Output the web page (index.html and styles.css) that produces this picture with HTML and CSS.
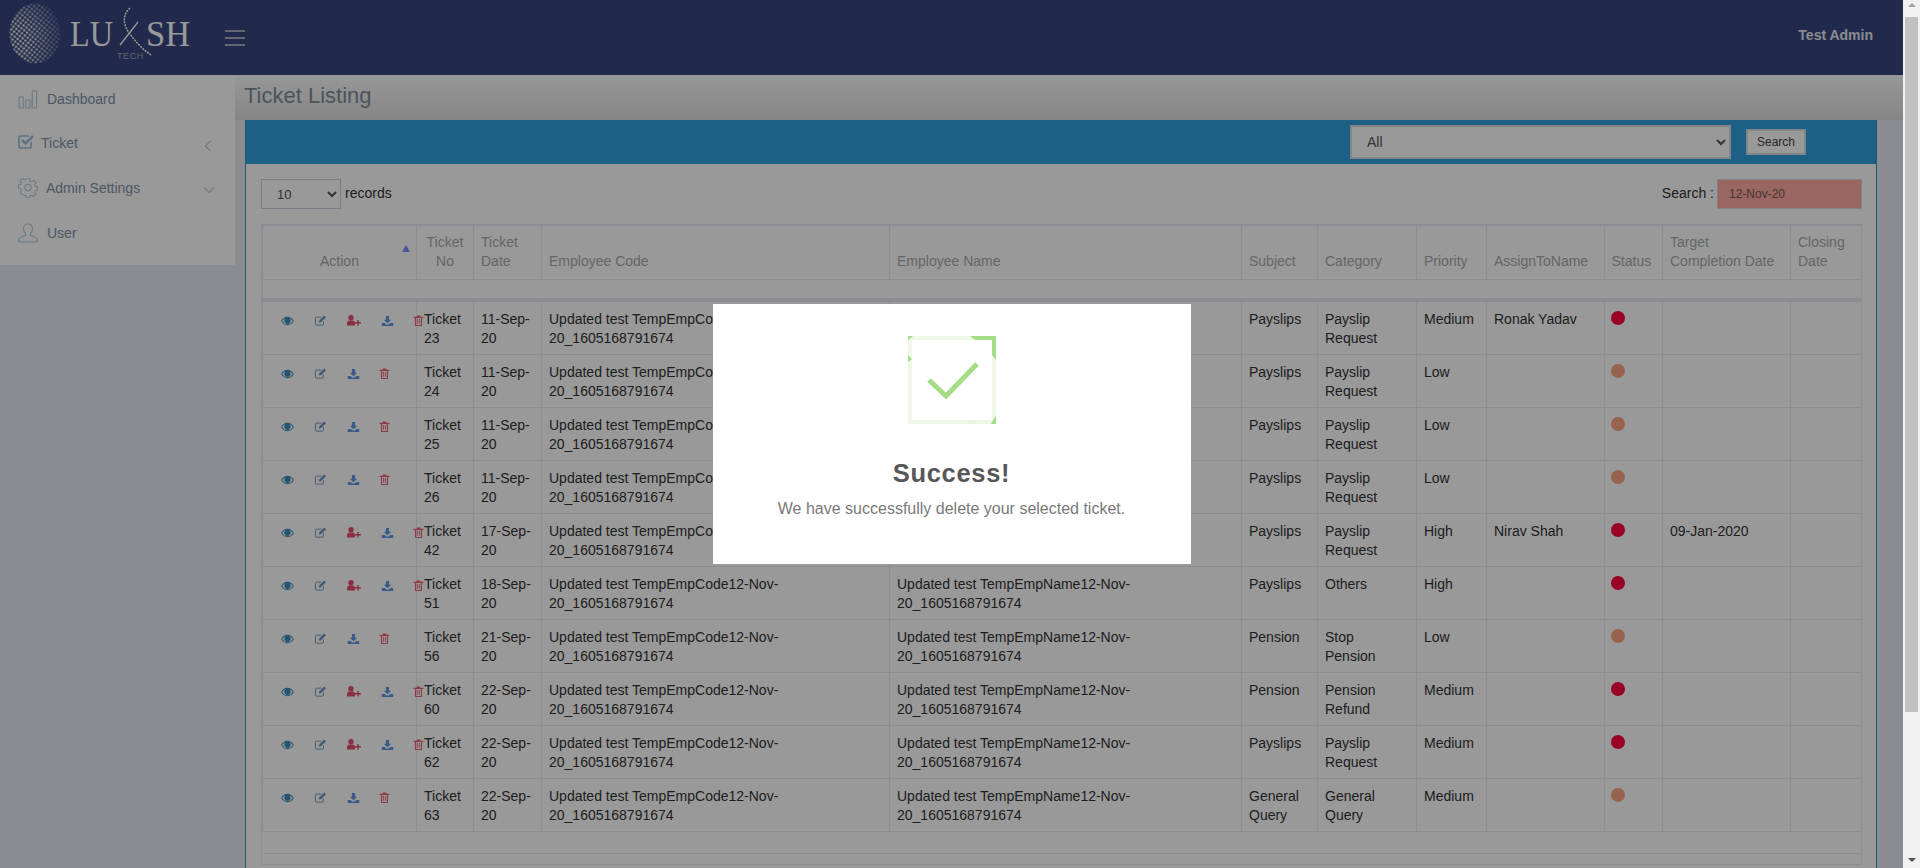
FILE: index.html
```html
<!DOCTYPE html>
<html lang="en">
<head>
<meta charset="utf-8">
<title>Ticket Listing</title>
<link rel="stylesheet" href="styles.css">
</head>
<body>
<svg class="defs" width="0" height="0" aria-hidden="true">
  <defs>
    <symbol id="i-eye" viewBox="0 0 16 12"><path d="M8 1C4.600 1 1.800 3.200.4 6c1.400 2.800 4.200 5 7.600 5s6.200-2.200 7.600-5C14.200 3.200 11.400 1 8 1zm0 9C5.200 10 2.900 8.300 1.700 6 2.700 4.300 4.200 3 6 2.400 4.900 3 4.200 4.300 4.200 5.800 4.200 7.900 5.900 9.600 8 9.600s3.800-1.700 3.800-3.800c0-1.500-.7-2.800-1.800-3.400 1.800.6 3.300 1.900 4.300 3.600C13.100 8.300 10.800 10 8 10z" fill="currentColor"/></symbol>
    <symbol id="i-edit" viewBox="0 0 14 13"><path d="M10.500 7.500v3a1.500 1.500 0 0 1-1.500 1.500H2.500A1.500 1.500 0 0 1 1 10.500V4A1.500 1.500 0 0 1 2.500 2.500H8" fill="none" stroke="currentColor" stroke-width="1.100"/><path d="M5 8.900 5.500 6.500 11.400.7 13.400 2.700 7.500 8.500z" fill="currentColor"/></symbol>
    <symbol id="i-add" viewBox="0 0 14 11"><circle cx="4" cy="2.800" r="2.700" fill="currentColor"/><path d="M0 10.500V8.300C0 6.700 1 5.500 2.500 5.500h3C7 5.500 8 6.700 8 8.300v2.200z" fill="currentColor"/><path d="M8 7.800h6M11 5v5.600" stroke="currentColor" stroke-width="1.400" fill="none"/></symbol>
    <symbol id="i-down" viewBox="0 0 13 12"><path d="M4.700 0h3.600v4.200h2.500L6.500 8.300 2.200 4.200h2.500zM0 8h3.300L5 9.700h3L9.700 8H13v3.600H0z" fill="currentColor"/></symbol>
    <symbol id="i-trash" viewBox="0 0 11 13"><path d="M0 2h11v1.300H0zM3.500 2V.5h4V2" fill="currentColor"/><path d="M1.500 3.300v8.200c0 .6.400 1 1 1h6c.6 0 1-.4 1-1V3.300H8.200v7.900H2.800V3.300zM4 4.500h1v5.500H4zM6 4.500h1v5.500H6z" fill="currentColor"/></symbol>
    <pattern id="dots" width="3.600" height="3.600" patternUnits="userSpaceOnUse" patternTransform="rotate(38)">
      <circle cx="1.800" cy="1.800" r="1.350" fill="#eee"/>
    </pattern>
    <radialGradient id="fade" cx="0.150" cy="0.600" r="0.950">
      <stop offset="0.250" stop-color="#fff"/>
      <stop offset="0.600" stop-color="#999"/>
      <stop offset="0.850" stop-color="#444"/>
      <stop offset="1" stop-color="#111"/>
    </radialGradient>
    <mask id="globe-mask"><ellipse cx="35" cy="33.500" rx="25.500" ry="30" fill="url(#fade)"/></mask>
  </defs>
</svg>

<div class="page">
<header class="topbar">
  <svg class="logo" width="200" height="75" viewBox="0 0 200 75" role="img" aria-label="Luxsh Tech logo">
    <rect x="8" y="2" width="56" height="64" fill="url(#dots)" mask="url(#globe-mask)"/>
    <text class="logo-word" x="70" y="46" textLength="43" lengthAdjust="spacingAndGlyphs">LU</text>
    <text class="logo-word" x="146" y="46" textLength="44" lengthAdjust="spacingAndGlyphs">SH</text>
    <path d="M130 8C122 15 123 25 130 34C136 42 142 49 151 55" fill="none" stroke="#fff" stroke-width="1.500" stroke-dasharray="2 1"/>
    <path d="M120 45 138 22" fill="none" stroke="#fff" stroke-width="1.300"/>
    <text class="logo-tech" x="117" y="59">TECH</text>
  </svg>
  <button class="burger" type="button" aria-label="Toggle menu"><span></span><span></span><span></span></button>
  <div class="admin">Test Admin</div>
</header>

<div class="layout">
  <nav class="sidebar">
    <a class="nav-item nav-dash">
      <svg width="20" height="19" viewBox="0 0 20 19" fill="none" stroke="currentColor" stroke-width="1.200"><rect x="1" y="7" width="4.300" height="11"/><rect x="7.700" y="10" width="4.300" height="8"/><rect x="14.300" y="1" width="4.300" height="17"/></svg>
      <span>Dashboard</span>
    </a>
    <a class="nav-item nav-ticket">
      <svg class="tick" width="17" height="15" viewBox="0 0 17 15"><path d="M13 8v4.500a1.500 1.500 0 0 1-1.500 1.500H2.500A1.500 1.500 0 0 1 1 12.500V3.500A1.500 1.500 0 0 1 2.500 2H11" fill="none" stroke="currentColor" stroke-width="1.700"/><path d="M4 6 7.500 9.500 15 2" fill="none" stroke="currentColor" stroke-width="2.600"/></svg>
      <span>Ticket</span>
      <svg class="chev" width="8" height="12" viewBox="0 0 8 12"><path d="M6.500 1 1.500 6l5 5" fill="none" stroke="currentColor" stroke-width="1.300"/></svg>
    </a>
    <a class="nav-item nav-admin">
      <svg width="20" height="20" viewBox="0 0 20 20" fill="none" stroke="currentColor" stroke-width="1.200"><path d="M8.300 1h3.400l.5 2.500 1.700.7 2.100-1.400 2.400 2.400-1.400 2.100.7 1.700 2.300.5v3.400l-2.300.5-.7 1.700 1.400 2.100-2.400 2.400-2.100-1.400-1.700.7-.5 2.100H8.300l-.5-2.100-1.700-.7L4 17.500l-2.400-2.400L3 13l-.7-1.700L0 10.800V7.400l2.300-.5L3 5.200 1.600 3.100 4 .7l2.100 1.400 1.700-.7z" transform="translate(.5 -.2) scale(.95)"/><circle cx="10" cy="9.500" r="3.200"/></svg>
      <span>Admin Settings</span>
      <svg class="chev" width="12" height="8" viewBox="0 0 12 8"><path d="M1 1.500 6 6.500l5-5" fill="none" stroke="currentColor" stroke-width="1.300"/></svg>
    </a>
    <a class="nav-item nav-user">
      <svg width="20" height="20" viewBox="0 0 20 20" fill="none" stroke="currentColor" stroke-width="1.200"><path d="M10 1c-3 0-4.500 2-4.500 4.800 0 2 .8 3.700 2 4.700v1.700L1 15.500V19h18v-3.500l-6.500-3.300v-1.700c1.200-1 2-2.700 2-4.700C14.500 3 13 1 10 1z"/></svg>
      <span>User</span>
    </a>
  </nav>

  <main class="main">
    <h1 class="page-title">Ticket Listing</h1>
    <div class="content">
      <section class="card">
        <div class="card-bar">
          <select class="bar-select"><option>All</option></select>
          <button class="bar-button" type="button">Search</button>
        </div>
        <div class="card-body">
          <div class="tools">
            <label class="records"><select class="len-select"><option>10</option></select> records</label>
            <label class="search">Search : <input class="search-input" type="text" value="12-Nov-20"></label>
          </div>
          <div class="table-wrap">
            <table class="grid">
              <colgroup>
                <col class="c1"><col class="c2"><col class="c3"><col class="c4"><col class="c5"><col class="c6"><col class="c7"><col class="c8"><col class="c9"><col class="c10"><col class="c11"><col class="c12">
              </colgroup>
              <thead>
                <tr class="head">
                  <th class="center sort">Action<i class="tri"></i></th>
                  <th class="center">Ticket No</th>
                  <th>Ticket Date</th>
                  <th>Employee Code</th>
                  <th>Employee Name</th>
                  <th>Subject</th>
                  <th>Category</th>
                  <th>Priority</th>
                  <th>AssignToName</th>
                  <th>Status</th>
                  <th>Target Completion Date</th>
                  <th>Closing Date</th>
                </tr>
                <tr class="filter"><td colspan="12"></td></tr>
              </thead>
              <tbody>
                <tr><td><div class="acts"><svg class="a eye"><use href="#i-eye"/></svg><svg class="a edit"><use href="#i-edit"/></svg><svg class="a add"><use href="#i-add"/></svg><svg class="a down"><use href="#i-down"/></svg><svg class="a trash"><use href="#i-trash"/></svg></div></td><td>Ticket 23</td><td>11-Sep-20</td><td>Updated test TempEmpCode12-Nov-20_1605168791674</td><td>Updated test TempEmpName12-Nov-20_1605168791674</td><td>Payslips</td><td>Payslip Request</td><td>Medium</td><td>Ronak Yadav</td><td><i class="dot red"></i></td><td></td><td></td></tr>
                <tr><td><div class="acts"><svg class="a eye"><use href="#i-eye"/></svg><svg class="a edit"><use href="#i-edit"/></svg><svg class="a down"><use href="#i-down"/></svg><svg class="a trash"><use href="#i-trash"/></svg></div></td><td>Ticket 24</td><td>11-Sep-20</td><td>Updated test TempEmpCode12-Nov-20_1605168791674</td><td>Updated test TempEmpName12-Nov-20_1605168791674</td><td>Payslips</td><td>Payslip Request</td><td>Low</td><td></td><td><i class="dot orange"></i></td><td></td><td></td></tr>
                <tr><td><div class="acts"><svg class="a eye"><use href="#i-eye"/></svg><svg class="a edit"><use href="#i-edit"/></svg><svg class="a down"><use href="#i-down"/></svg><svg class="a trash"><use href="#i-trash"/></svg></div></td><td>Ticket 25</td><td>11-Sep-20</td><td>Updated test TempEmpCode12-Nov-20_1605168791674</td><td>Updated test TempEmpName12-Nov-20_1605168791674</td><td>Payslips</td><td>Payslip Request</td><td>Low</td><td></td><td><i class="dot orange"></i></td><td></td><td></td></tr>
                <tr><td><div class="acts"><svg class="a eye"><use href="#i-eye"/></svg><svg class="a edit"><use href="#i-edit"/></svg><svg class="a down"><use href="#i-down"/></svg><svg class="a trash"><use href="#i-trash"/></svg></div></td><td>Ticket 26</td><td>11-Sep-20</td><td>Updated test TempEmpCode12-Nov-20_1605168791674</td><td>Updated test TempEmpName12-Nov-20_1605168791674</td><td>Payslips</td><td>Payslip Request</td><td>Low</td><td></td><td><i class="dot orange"></i></td><td></td><td></td></tr>
                <tr><td><div class="acts"><svg class="a eye"><use href="#i-eye"/></svg><svg class="a edit"><use href="#i-edit"/></svg><svg class="a add"><use href="#i-add"/></svg><svg class="a down"><use href="#i-down"/></svg><svg class="a trash"><use href="#i-trash"/></svg></div></td><td>Ticket 42</td><td>17-Sep-20</td><td>Updated test TempEmpCode12-Nov-20_1605168791674</td><td>Updated test TempEmpName12-Nov-20_1605168791674</td><td>Payslips</td><td>Payslip Request</td><td>High</td><td>Nirav Shah</td><td><i class="dot red"></i></td><td>09-Jan-2020</td><td></td></tr>
                <tr><td><div class="acts"><svg class="a eye"><use href="#i-eye"/></svg><svg class="a edit"><use href="#i-edit"/></svg><svg class="a add"><use href="#i-add"/></svg><svg class="a down"><use href="#i-down"/></svg><svg class="a trash"><use href="#i-trash"/></svg></div></td><td>Ticket 51</td><td>18-Sep-20</td><td>Updated test TempEmpCode12-Nov-20_1605168791674</td><td>Updated test TempEmpName12-Nov-20_1605168791674</td><td>Payslips</td><td>Others</td><td>High</td><td></td><td><i class="dot red"></i></td><td></td><td></td></tr>
                <tr><td><div class="acts"><svg class="a eye"><use href="#i-eye"/></svg><svg class="a edit"><use href="#i-edit"/></svg><svg class="a down"><use href="#i-down"/></svg><svg class="a trash"><use href="#i-trash"/></svg></div></td><td>Ticket 56</td><td>21-Sep-20</td><td>Updated test TempEmpCode12-Nov-20_1605168791674</td><td>Updated test TempEmpName12-Nov-20_1605168791674</td><td>Pension</td><td>Stop Pension</td><td>Low</td><td></td><td><i class="dot orange"></i></td><td></td><td></td></tr>
                <tr><td><div class="acts"><svg class="a eye"><use href="#i-eye"/></svg><svg class="a edit"><use href="#i-edit"/></svg><svg class="a add"><use href="#i-add"/></svg><svg class="a down"><use href="#i-down"/></svg><svg class="a trash"><use href="#i-trash"/></svg></div></td><td>Ticket 60</td><td>22-Sep-20</td><td>Updated test TempEmpCode12-Nov-20_1605168791674</td><td>Updated test TempEmpName12-Nov-20_1605168791674</td><td>Pension</td><td>Pension Refund</td><td>Medium</td><td></td><td><i class="dot red"></i></td><td></td><td></td></tr>
                <tr><td><div class="acts"><svg class="a eye"><use href="#i-eye"/></svg><svg class="a edit"><use href="#i-edit"/></svg><svg class="a add"><use href="#i-add"/></svg><svg class="a down"><use href="#i-down"/></svg><svg class="a trash"><use href="#i-trash"/></svg></div></td><td>Ticket 62</td><td>22-Sep-20</td><td>Updated test TempEmpCode12-Nov-20_1605168791674</td><td>Updated test TempEmpName12-Nov-20_1605168791674</td><td>Payslips</td><td>Payslip Request</td><td>Medium</td><td></td><td><i class="dot red"></i></td><td></td><td></td></tr>
                <tr><td><div class="acts"><svg class="a eye"><use href="#i-eye"/></svg><svg class="a edit"><use href="#i-edit"/></svg><svg class="a down"><use href="#i-down"/></svg><svg class="a trash"><use href="#i-trash"/></svg></div></td><td>Ticket 63</td><td>22-Sep-20</td><td>Updated test TempEmpCode12-Nov-20_1605168791674</td><td>Updated test TempEmpName12-Nov-20_1605168791674</td><td>General Query</td><td>General Query</td><td>Medium</td><td></td><td><i class="dot orange"></i></td><td></td><td></td></tr>
              </tbody>
            </table>
            <div class="foot-a"></div>
            <div class="foot-b"></div>
          </div>
        </div>
      </section>
    </div>
  </main>
</div>
</div>

<div class="overlay">
  <div class="alert" role="dialog">
    <svg class="alert-icon" width="88" height="88" viewBox="0 0 88 88">
      <rect x="2" y="2" width="84" height="84" fill="none" stroke="#a5dc86" stroke-opacity="0.2" stroke-width="4"/>
      <path d="M62 0H88V24L84 19V4H67zM0 0H5L0 4zM0 19 4 23 0 26zM88 79V88H83z" fill="#a5dc86"/>
      <path d="M59 84 65 88M63 84 69 88" stroke="#a5dc86" stroke-opacity="0.35" stroke-width="1"/>
      <path d="M21 44 38 60 69 28" fill="none" stroke="#a5dc86" stroke-width="5"/>
    </svg>
    <h2 class="alert-title">Success!</h2>
    <p class="alert-text">We have successfully delete your selected ticket.</p>
  </div>
</div>

<div class="scrollbar" aria-hidden="true">
  <i class="sb-up"></i>
  <div class="sb-thumb"></div>
  <i class="sb-down"></i>
</div>
</body>
</html>
```
FILE: styles.css
```css
* { box-sizing: border-box; }
body {
  margin: 0;
  background: #e6e9f3;
  font-family: "Liberation Sans", Arial, sans-serif;
  font-size: 14px;
  line-height: 19px;
  color: #333;
}
.defs { position: absolute; }
.page { margin-right: 17px; }

.scrollbar {
  position: fixed;
  top: 0;
  right: 0;
  bottom: 0;
  width: 17px;
  background: #f1f1f1;
  display: flex;
  flex-direction: column;
  align-items: center;
}
.sb-thumb { width: 13px; height: 695px; background: #c1c1c1; margin-top: 10px; }
.sb-up { margin-top: 3px; border: 4px solid transparent; border-top: 0; border-bottom: 4px solid #a3a3a3; }
.sb-down { margin-top: auto; margin-bottom: 6px; border: 4px solid transparent; border-bottom: 0; border-top: 4px solid #505050; }

.topbar {
  height: 75px;
  background: #37467f;
  display: flex;
  align-items: center;
}
.logo { flex: none; display: block; }
.logo-word { font-family: "Liberation Serif", serif; font-size: 36px; fill: #fff; }
.logo-tech { font-family: "Liberation Sans", sans-serif; font-size: 9px; letter-spacing: .6px; fill: #a8a8b8; }
.burger {
  margin-left: 25px;
  width: 20px;
  padding: 0;
  border: 0;
  background: none;
  display: flex;
  flex-direction: column;
  gap: 5px;
}
.burger span { display: block; height: 2px; background: #a5abc0; }
.admin { margin-left: auto; margin-right: 30px; margin-bottom: 4px; font-weight: 700; font-size: 14px; color: #e4e6ee; }

.layout { display: flex; align-items: flex-start; }
.sidebar {
  width: 235px;
  height: 190px;
  flex: none;
  background: #fff;
  display: flex;
  flex-direction: column;
  color: #b8cfe0;
}
.nav-item { display: flex; align-items: center; padding-left: 18px; position: relative; flex: none; }
.nav-item span { color: #7f92a8; font-size: 14px; }
.nav-dash { height: 48px; }
.nav-dash span { margin-left: 9px; }
.nav-ticket { height: 40px; }
.nav-ticket span { margin-left: 6px; }
.tick { margin-top: -4px; color: #a0bfd6; }
.nav-admin { height: 50px; }
.nav-admin span { margin-left: 8px; }
.nav-user { height: 40px; }
.nav-user span { margin-left: 9px; }
.chev { position: absolute; left: 204px; top: 17px; color: #c5d0da; }
.nav-admin .chev { left: 203px; top: 23px; }

.main { flex: 1; min-width: 0; }
.page-title {
  margin: 0;
  height: 45px;
  padding: 9px 0 0 9px;
  background: linear-gradient(#fdfdfd, #dfdfdf);
  font-size: 22px;
  line-height: 24px;
  font-weight: 400;
  color: #7f8c99;
}
.content { padding: 0 26px 0 10px; }
.card { background: #fff; border: solid #3c8dbc; border-width: 0 1px; }
.card-bar {
  height: 44px;
  background: #31a0df;
  display: flex;
  align-items: center;
  padding-left: 1104px;
}
.bar-select {
  width: 381px;
  height: 34px;
  padding-left: 11px;
  border: 2px solid #d8dde3;
  background: #fff;
  font: 14px "Liberation Sans", Arial, sans-serif;
  color: #555;
}
.bar-button {
  margin-left: 15px;
  width: 60px;
  height: 26px;
  border: 2px solid #d8dde3;
  background: #fff;
  font: 12px "Liberation Sans", Arial, sans-serif;
  color: #444;
  padding: 0;
}
.card-body { padding: 15px 14px 180px 15px; }
.tools { height: 45px; display: flex; justify-content: space-between; align-items: flex-start; }
.records, .search { display: flex; align-items: flex-start; gap: 4px; line-height: 28px; color: #333; }
.search { gap: 3px; }
.len-select {
  width: 80px;
  height: 30px;
  padding-left: 11px;
  border: 1px solid #ccd3dc;
  background: #fff;
  font: 13px "Liberation Sans", Arial, sans-serif;
  color: #555;
}
.search-input {
  width: 145px;
  height: 30px;
  padding-left: 11px;
  border: 1px solid #d4d8e0;
  background: #ffaaa3;
  font: 12px "Liberation Sans", Arial, sans-serif;
  color: #7a5550;
}

.table-wrap { border: solid #e6ecf3; border-width: 0 1px 1px; width: 1601px; }
.grid { width: 1600px; border-collapse: collapse; table-layout: fixed; }
.c1 { width: 154px; }
.c2 { width: 57px; }
.c3 { width: 68px; }
.c4 { width: 348px; }
.c5 { width: 352px; }
.c6 { width: 76px; }
.c7 { width: 99px; }
.c8 { width: 70px; }
.c9 { width: 117.500px; }
.c10 { width: 58.500px; }
.c11 { width: 128px; }
.c12 { width: 71px; }
.grid th, .grid td { border: 1px solid #e6ecf3; padding: 8px 9px 6px 7px; vertical-align: top; text-align: left; }
.grid th { vertical-align: bottom; font-weight: 400; color: #aaa; height: 54px; position: relative; padding: 6px 7px 8px; }
.grid .center { text-align: center; }
.head th { border-top-width: 2px; }
.filter td { height: 21px; padding: 0; border-bottom: 4px solid #e8ecf0; }
tbody tr { height: 53px; }
.tri {
  position: absolute;
  right: 6px;
  top: 19px;
  border: 4px solid transparent;
  border-top: 0;
  border-bottom: 7px solid #7b8eff;
}
.acts { display: flex; width: 33px; margin: 5px 0 0 1px; align-items: center; }
.a { flex: none; width: 33px; }
.eye { height: 10px; color: #3c8dbc; }
.edit { height: 11px; color: #6b92c4; }
.add { height: 11px; width: 34px; color: #e64d6b; }
.down { height: 10.500px; color: #5f98e6; }
.trash { height: 11.500px; margin-left: -2px; color: #f25f6f; }
.dot { display: block; width: 14px; height: 14px; border-radius: 50%; margin: 1px 0 0 -1px; }
.red { background: #ff0040; }
.orange { background: #ffa583; }
.foot-a { height: 22px; border-bottom: 1px solid #e6ecf3; }
.foot-b { height: 10px; }

.overlay {
  position: fixed;
  top: 0;
  left: 0;
  right: 17px;
  bottom: 0;
  background: rgba(0, 0, 0, .4);
  display: flex;
  align-items: center;
  justify-content: center;
}
.alert {
  width: 478px;
  height: 260px;
  background: #fff;
  padding-top: 32px;
  text-align: center;
}
.alert-icon { display: block; margin: 0 auto; }
.alert-title { margin: 33px 0 0; font-size: 25.500px; line-height: 32px; letter-spacing: .7px; font-weight: 700; color: #575757; }
.alert-text { margin: 9px 0 0; font-size: 16px; line-height: 22px; color: #797979; }
```
